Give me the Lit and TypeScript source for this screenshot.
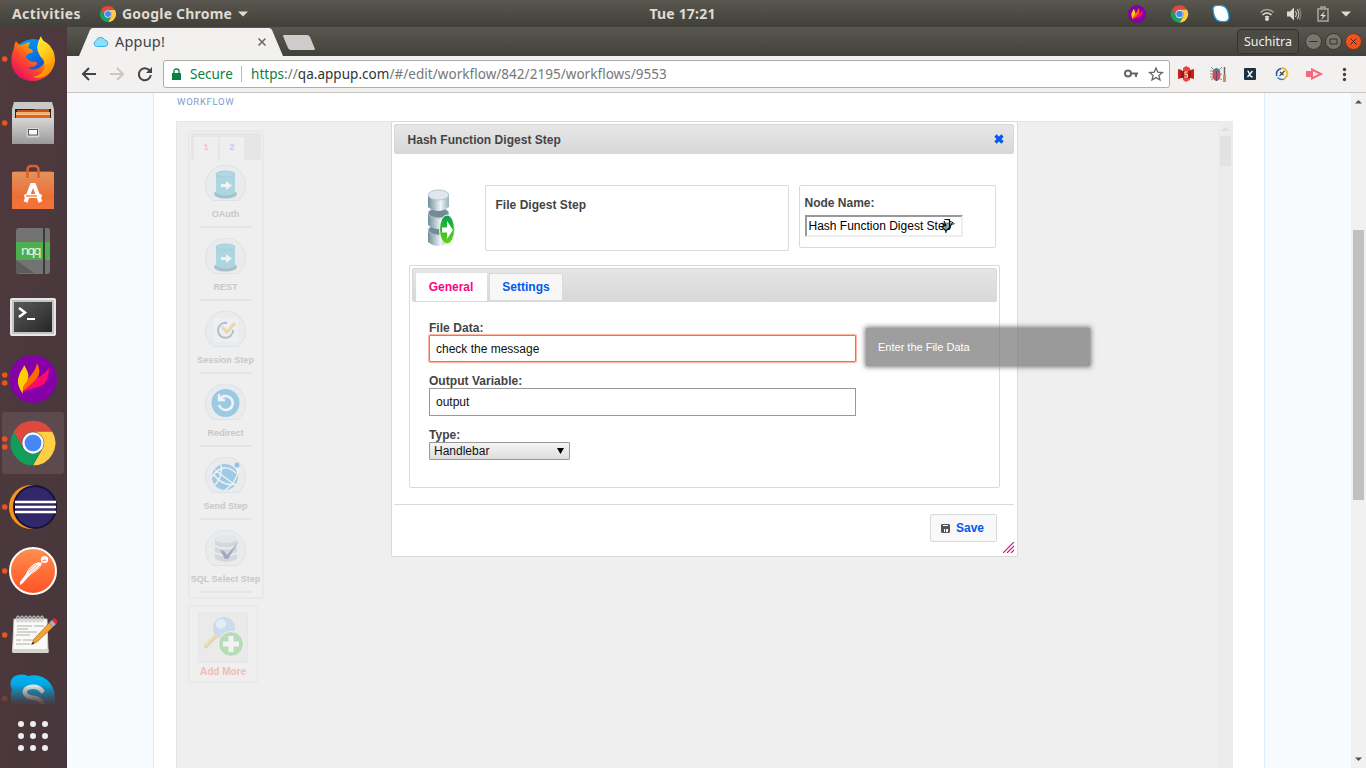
import { LitElement, html, svg, css } from "lit";
import { customElement } from "lit/decorators.js";

const chromeMark = (size: number) => html`<svg width=${size} height=${size} viewBox="-24 -24 48 48">
  <path fill="#dd4b3e" d="M-20.8-12A24 24 0 0 1 20.8-12H0A12 12 0 0 0-10.4 6Z" />
  <path fill="#ffcd43" transform="rotate(120)" d="M-20.8-12A24 24 0 0 1 20.8-12H0A12 12 0 0 0-10.4 6Z" />
  <path fill="#16a160" transform="rotate(240)" d="M-20.8-12A24 24 0 0 1 20.8-12H0A12 12 0 0 0-10.4 6Z" />
  <circle r="11.2" fill="#f4f6fb" /><circle r="8.9" fill="#4587f4" />
</svg>`;

const flame = svg`
  <circle cx="24" cy="24" r="24" fill="#8600a8" />
  <path fill="#ff0a6c" d="M15 37C14 27 28 25 33 20Q37 17 40 13Q40 23 35 29Q29 33 22 34Q18 35 15 37Z" />
  <path fill="#ff6a00" d="M14 34C16 24 27 18 28 8Q33 17 28 23Q24 28 14 36Z" />
  <path fill="#ffce00" d="M14 39Q8 31 9 24Q10 18 14 13Q15 11 15 10Q21 19 19 24C17 29 13 30 14 39Z" />`;

const dockIcons = [
  { dots: [31], art: svg`
    <defs>
      <linearGradient id="fx" x1="1" y1="0" x2="0.1" y2="1"><stop offset="0" stop-color="#fff44f"/><stop offset=".35" stop-color="#ffa000"/><stop offset=".6" stop-color="#ff4b2b"/><stop offset="1" stop-color="#e0006f"/></linearGradient>
      <linearGradient id="fb" x1="0" y1="0" x2="1" y2="1"><stop offset="0" stop-color="#00b5f5"/><stop offset=".5" stop-color="#0a6fe8"/><stop offset="1" stop-color="#2a2a8c"/></linearGradient>
      <linearGradient id="fy" x1="0" y1="0" x2=".5" y2="1"><stop offset="0" stop-color="#fff14a"/><stop offset=".5" stop-color="#ffd21e"/><stop offset="1" stop-color="#ff8a00"/></linearGradient>
    </defs>
    <circle cx="33.5" cy="31" r="20" fill="url(#fb)"/>
    <path fill="url(#fx)" d="M16 13Q18 17 22 17Q26 15 30 14L28 20Q33 21 33 24L28 26Q25 28 26 30Q29 33 33 34Q37 33 37 36Q34 40 27 39Q31 43 36 41Q44 39 46 30L54 26Q56 38 49 46Q41 54 30 53Q16 51 12 39Q10 30 14 20Q14 16 16 13Z"/>
    <path fill="url(#fy)" d="M41 8Q42 13 47 15Q55 21 55 33Q54 43 45 48Q38 51 33 49Q44 47 45 38Q45 33 40 28Q34 19 41 8Z"/>` },
  { dots: [31], art: svg`
    <defs><linearGradient id="cab" x2="0" y2="1"><stop offset="0" stop-color="#d6d6d6"/><stop offset="1" stop-color="#9a9a9a"/></linearGradient></defs>
    <path fill="#c9c9c9" d="M14 10h38l2 7v35H12V17z"/><rect x="15" y="17" width="36" height="13" fill="#2a2320"/>
    <path fill="#c2511a" d="M17 18h17l1-1h14v3H17z"/><path fill="#f3b06a" d="M16 20h34v2H16z"/><path fill="#e0621f" d="M16 23h34v3H16z"/><path fill="#f5c28c" d="M16 22h34v1H16z"/>
    <rect x="12" y="26" width="42" height="26" fill="url(#cab)"/><rect x="26.500" y="35.500" width="13" height="10" rx="2" fill="#d8d8d8" stroke="#bbb"/><rect x="28.500" y="37.500" width="9" height="5.500" fill="#fafafa" stroke="#555"/>` },
  { dots: [], art: svg`
    <defs><linearGradient id="bag" x2="0" y2="1"><stop offset="0" stop-color="#e5915b"/><stop offset="1" stop-color="#ee5f24"/></linearGradient></defs>
    <path fill="#b04a1d" d="M14 15h38v4H14z"/><path fill="url(#bag)" d="M12 16h42v37H12z"/><path fill="#f27239" d="M12 43h42v10H12z"/>
    <path d="M27.500 22v-8q0-4 4-4h3q4 0 4 4v8" fill="none" stroke="#e45d26" stroke-width="2.500"/>
    <path d="M25.500 46l6.500-17h2l6.500 17" fill="none" stroke="#fff" stroke-width="4"/><rect x="24" y="38" width="18" height="4" rx="2" fill="#fff"/><path d="M26 40h11" stroke="#f06a2e" stroke-width="1.200"/>` },
  { dots: [], art: svg`
    <rect x="16" y="8" width="34" height="46" rx="3" fill="#737373"/><rect x="16" y="22" width="34" height="18" fill="#4caf50"/><path fill="#5c5c5c" d="M16 40l18 13h-16q-2 0-2-2z"/><path d="M44 8v46" stroke="#3c3c3c" stroke-width="2"/>
    <text x="21" y="34.500" class="nqq" textLength="20.500">nqq</text>` },
  { dots: [], art: svg`
    <defs><linearGradient id="tm" x2="1" y2="1"><stop offset="0" stop-color="#5a5a5a"/><stop offset="1" stop-color="#262626"/></linearGradient></defs>
    <rect x="10" y="14" width="46" height="38" rx="2" fill="#e6e6e6"/><rect x="12" y="16" width="42" height="34" fill="#c4c4c4"/><rect x="14" y="18" width="38" height="30" fill="url(#tm)"/><path d="M19 24l6 4.500-6 4.500" fill="none" stroke="#fff" stroke-width="2.500"/><path d="M27 35h8" stroke="#fff" stroke-width="2"/>` },
  { dots: [27, 35], art: svg`<g transform="translate(9 7)">${flame}</g>` },
  { dots: [27, 35], active: true, art: svg`<g transform="translate(33 31) scale(.93)">
    <path fill="#dc4a3d" d="M-20.8-12A24 24 0 0 1 20.8-12H0A12 12 0 0 0-10.4 6Z" />
    <path fill="#ffce44" transform="rotate(120)" d="M-20.8-12A24 24 0 0 1 20.8-12H0A12 12 0 0 0-10.4 6Z" />
    <path fill="#119e5b" transform="rotate(240)" d="M-20.8-12A24 24 0 0 1 20.8-12H0A12 12 0 0 0-10.4 6Z" />
    <circle r="11.500" fill="#f4f6fb" /><circle r="9" fill="#4587f4" /></g>` },
  { dots: [31], art: svg`
    <circle cx="31" cy="31" r="22" fill="#f7941e"/><circle cx="35" cy="31" r="22" fill="#18133a"/><circle cx="35" cy="31" r="20" fill="#32276b"/>
    <path d="M15 26h41M15 31h41M15 36h41" stroke="#fff" stroke-width="2.300"/>` },
  { dots: [31], art: svg`
    <defs><linearGradient id="pm" x2="0" y2="1"><stop offset="0" stop-color="#ff8f4e"/><stop offset="1" stop-color="#ff5325"/></linearGradient></defs>
    <circle cx="33" cy="31" r="23" fill="url(#pm)" stroke="#fff" stroke-width="2"/>
    <circle cx="44.500" cy="19.500" r="3.600" fill="#fff"/><path d="M42 23Q41 27 36 31L29 36 23 43 20 45 20 42 26 34Q28 28 34 24Q39 21 42 23Z" fill="#fff"/><path d="M38 25l-9 8M36 24l-8 7M40 26l-9 8" stroke="#ff7840" stroke-width=".7"/><path d="M42.500 20.500l4-.5" stroke="#ff7840"/>` },
  { dots: [31], art: svg`
    <path fill="#fafaf8" stroke="#cfcfc8" d="M14 15h33l1 33H12.500z"/><path fill="#d4d4ce" d="M12.500 45h36v4h-36z"/>
    ${[18, 22, 26, 30, 34, 38, 42].map((x) => svg`<ellipse cx=${x} cy="15" rx="1.300" ry="3" fill="none" stroke="#ccc" stroke-width="1.200"/>`)}
    <path d="M17 22h15m2 0h10M17 25h11M17 28h20M16 31h14M16 36h5m2 0h10M16 40h14" stroke="#999" stroke-width=".8"/>
    <path fill="#f3a236" stroke="#9b5b18" stroke-width=".6" d="M32 40l2-5 15-16 4 4-16 15z"/><path fill="#a8b0b5" d="M49 19l3-3 4 4-3 3z"/><path fill="#e4283c" d="M52 16q2-3 4-1t1 4l-1 1z"/><path fill="#222" d="M31 41l2-3 1.500 1.500z"/>` },
  { dots: [31], art: svg`
    <defs><linearGradient id="sk" x2="0" y2="1"><stop offset="0" stop-color="#00b3f2"/><stop offset="1" stop-color="#0793c6"/></linearGradient></defs>
    <path fill="url(#sk)" d="M12 22Q8 13 14 8.500Q21 5 28 8Q42 5 50 15Q56 22 55 36H11V24Z"/><path d="M42 23Q38 18 31 19Q24 20 25 25Q26 29 34 30Q40 31 42 35" fill="none" stroke="#eee" stroke-width="4.500" stroke-linecap="round"/>
    <defs><linearGradient id="fade" x2="0" y2="1"><stop offset=".45" stop-color="#4a373c" stop-opacity="0"/><stop offset=".95" stop-color="#4a373c" stop-opacity=".9"/></linearGradient></defs><rect width="67" height="36" fill="url(#fade)"/>` },
];

const drum = svg`<ellipse cx="20.500" cy="29" rx="11.500" ry="4.500" fill="#48818f"/><path fill="#52b7cd" d="M11 9h19v19q-9 5-19 0z"/><ellipse cx="20.500" cy="9" rx="9.500" ry="3" fill="#58bed2" stroke="#399cb5" stroke-width=".8"/><path fill="#fff" d="M16 19h5v-3l6 4.500-6 4.500v-3h-5z"/>`;
const steps = [
  { name: "OAuth", art: drum },
  { name: "REST", art: drum },
  { name: "Session Step", art: svg`<rect x="9" y="7" width="24" height="24" fill="#f5f6f6"/><path d="M22 12a7.500 7.500 0 1 0 6 7" fill="none" stroke="#677a9f" stroke-width="2"/><path d="M17 16l5 5 8-9" fill="none" stroke="#edb746" stroke-width="3"/>` },
  { name: "Redirect", art: svg`<circle cx="20.500" cy="19" r="14" fill="#2a99d9"/><path d="M15 15a7 7 0 1 1-1 6M14 10v6h6" fill="none" stroke="#fff" stroke-width="2.400"/>` },
  { name: "Send Step", art: svg`<circle cx="20" cy="20" r="13" fill="#359bd8"/><path d="M20 33Q34 24 33 8M7 20Q18 4 31 16M10 28Q18 19 16 8M8 17Q18 30 31 27M10 13l20 15" fill="none" stroke="#fff" stroke-width="1.300"/><circle cx="32" cy="8" r="2.500" fill="#2182ca"/>` },
  { name: "SQL Select Step", art: svg`<path fill="#b9bcbf" d="M10 9v20q11 6 22 0V9z"/><ellipse cx="21" cy="9" rx="11" ry="4" fill="#dfe0e1"/><path d="M10 16q11 5 22 0M10 23q11 5 22 0" fill="none" stroke="#f4f4f4" stroke-width="1.500"/><path fill="#354a90" d="M15 20l4 1 3 4 12-14-11 18h-3z"/>` },
];

@customElement("app-root")
export class AppRoot extends LitElement {
  static styles = css`
    :host { display: flex; flex-direction: column; width: 1366px; height: 768px; overflow: hidden; font-family: "Liberation Sans", sans-serif; color: #444; }
    * { box-sizing: border-box; }
    svg { display: block; flex: none; }
    .panel { height: 27px; display: grid; grid-template-columns: 1fr auto 1fr; align-items: center; padding: 0 13px 0 12px; background: linear-gradient(#59574f, #403f39); color: #dfdbd2; font: 700 14px/25px "Noto Sans", sans-serif; }
    .pleft, .pright { display: flex; align-items: center; }
    .pright { justify-content: flex-end; padding-right: 1px; }
    .act { width: 88px; letter-spacing: .4px; }
    .app { margin-left: 6px; width: 111px; letter-spacing: .2px; white-space: nowrap; }
    .tri { margin-left: 5px; }
    .clock { letter-spacing: .2px; }
    .main { display: flex; height: 741px; }
    .dock { width: 67px; background: linear-gradient(100deg, #4f3a3e, #47363b); }
    .list { height: 677px; overflow: hidden; padding-top: 1px; }
    .item { position: relative; width: 67px; height: 64px; }
    .item.active::before { content: ""; position: absolute; left: 2px; top: 0; width: 62px; height: 62px; background: #5d4a4f; border-radius: 3px; }
    .item svg { position: relative; }
    .nqq { font: 13px "Noto Sans", sans-serif; fill: #e8f5e9; }
    .win { flex: 1; display: flex; flex-direction: column; }
    .tabs { height: 29px; display: flex; background: linear-gradient(#59584f, #41403a); }
    .tab { position: relative; width: 204px; margin-left: 12px; padding: 0 17px 0 14px; display: flex; align-items: center; font: 14.500px/24px "Noto Sans", sans-serif; color: #444; }
    .tabshape { position: absolute; left: 0; top: 0; }
    .tab > :not(.tabshape) { position: relative; }
    .tab span { margin-left: 6px; flex: 1; letter-spacing: .2px; padding-bottom: 1px; }
    .newtab { margin: 8px 0 0 0; }
    .wctl { margin-left: auto; display: flex; align-items: center; gap: 3px; padding-right: 4px; }
    .user { width: 62px; height: 25px; border: 1px solid #33322d; border-radius: 4px; background: #4b4a44; color: #eee; font: 12.500px/23px "Noto Sans", sans-serif; text-align: center; margin-right: 3px; }
    .bar { height: 37px; background: #f2f1f0; border-bottom: 1px solid #c6c5c4; display: flex; align-items: center; }
    .nav { width: 96px; }
    .addr { width: 1007px; height: 28px; border: 1px solid #aeaead; border-radius: 3px; background: #fff; display: flex; align-items: center; padding: 0 4px 0 8px; font: 13.500px/26px "Noto Sans", sans-serif; color: #3d3d3d; }
    .sec { color: #0b8043; margin-left: 9px; width: 43px; white-space: nowrap; }
    .sep { width: 1px; height: 16px; background: #bbb; margin: 0 9px 0 8px; }
    .url { flex: 1; white-space: nowrap; color: #777; letter-spacing: .035px; }
    .url b { color: #0b8043; font-weight: 400; } .url i { color: #333; font-style: normal; }
    .page { flex: 1; display: flex; background: #f8fbfe; min-height: 0; }
    .sheet { width: 1112px; margin-left: 86px; background: #fff; border: solid #dbedfb; border-width: 0 1px; padding: 3px 31px 0 22px; }
    .wf { margin: 0; height: 25px; padding-left: 1px; color: #7d9cc9; font: 400 9.500px/12px Roboto, sans-serif; letter-spacing: .7px; }
    .canvas { position: relative; height: 647px; background: #efefef; border: 1px solid #e5e5e5; border-bottom: 0; padding: 8px 0 0 11px; }
    .palette { width: 76px; height: 469px; border: 2px solid #e9e9e9; border-radius: 3px; }
    .ptabs { height: 27px; margin: 1px 1px 5px; width: 70px; border-radius: 3px; background: #e6e6e6; display: flex; padding: 4px 0 0 3px; gap: 2px; font: bold 9px/21px "Liberation Sans", sans-serif; text-align: center; }
    .ptabs span { width: 24px; background: #efefef; } .p1 { color: #efbbd6; } .p2 { color: #b9c9ef; }
    .step { height: 73px; margin-right: 1px; display: flex; flex-direction: column; align-items: center; color: #c8c8c8; font: bold 9.050px/12px "Liberation Sans", sans-serif; white-space: nowrap; }
    .step svg { margin-bottom: 6px; width: 41px; }
    .art { opacity: .4; }
    .step hr { margin: 6px 0 0; width: 52px; height: 2px; border: 0; background: #e5e5e5; flex: none; }
    .more { margin-top: 6px; width: 70px; height: 78px; border: 1px solid #e7e7e7; border-radius: 2px; padding-top: 6px; display: flex; flex-direction: column; align-items: center; color: #f2bcb2; font: bold 10px/17px "Liberation Sans", sans-serif; white-space: nowrap; }
    .vs { position: absolute; right: -1px; top: -1px; width: 15px; height: 647px; background: #ececec; }
    .vs::before { content: ""; position: absolute; left: 2px; top: 15px; width: 11px; height: 30px; background: #e2e2e2; }
    .vs svg { margin: 5px 0 0 3px; }
    .dialog { position: absolute; left: 214px; top: -1px; width: 627px; height: 436px; border: 1px solid #dadada; border-radius: 2px; background: #fff; padding: 2px 3px 2px 2px; font: 12px/15px "Liberation Sans", sans-serif; }
    .title { height: 30px; border: 1px solid #d8d8d8; border-radius: 2px; background: linear-gradient(#e6e6e6, #d8d8d8); padding: 0 9px 0 12.500px; display: flex; align-items: center; justify-content: space-between; font-weight: bold; color: #444; letter-spacing: .03px; }
    .title span { padding-top: 2px; }
    .top { display: flex; margin-top: 31px; height: 80px; padding-left: 33px; align-items: flex-start; }
    .top > svg { margin: 4px 0 0 1px; }
    .box { border: 1px solid #dadada; border-radius: 2px; font-weight: bold; }
    .desc { width: 304px; height: 66px; margin-left: 28px; padding: 12px 9.500px; letter-spacing: .03px; }
    .node { width: 197px; height: 63px; margin-left: 10px; padding: 10px 5px 0 4.500px; }
    .nin { position: relative; width: 158px; height: 22px; margin-top: 4px; border: 2px solid; border-color: #999 #eee #eee #999; font-weight: 400; color: #000; padding-left: 2px; line-height: 19px; white-space: nowrap; }
    .nin svg { position: absolute; left: 132px; top: 0; }
    .pane { width: 591px; height: 223px; margin-left: 15px; border: 1px solid #dadada; border-radius: 2px; padding: 2px; }
    .thead { height: 34px; border: 1px solid #d8d8d8; border-radius: 2px; background: linear-gradient(#e5e5e5, #d8d8d8); display: flex; padding: 4px 2px 0 3px; gap: 2px; font-weight: bold; line-height: 28px; text-align: center; }
    .t1 { width: 71px; background: #fff; color: #fb0680; padding-right: 1px; } .t2 { width: 74px; height: 28px; border: 1px solid #dadada; background: #f7f7f7; color: #0359ec; line-height: 26px; }
    .form { padding: 19px 0 0 17px; display: flex; flex-direction: column; }
    .form label { font-weight: bold; height: 14px; letter-spacing: .04px; }
    .in { width: 427px; height: 28px; border: 1px solid #999; color: #111; padding-left: 6px; line-height: 26px; margin-bottom: 12px; }
    .in.f { height: 27px; border-color: #dd7852; box-shadow: 0 0 1px 1px #ffb199; border-radius: 1px; }
    .sel { width: 141px; height: 18px; border: 1px solid #999; border-radius: 1px; background: linear-gradient(#f5f5f5, #dedede); color: #111; padding: 0 5px 0 4px; line-height: 16px; display: flex; justify-content: space-between; align-items: center; }
    .foot { border-top: 1px solid #dadada; margin-top: 16px; padding: 9px 17px 0 0; display: flex; justify-content: flex-end; }
    .save { width: 67px; height: 28px; border: 1px solid #dadada; border-radius: 2px; background: #f8f8f8; display: flex; align-items: center; color: #0359ec; font-weight: bold; padding-left: 10px; gap: 6px; }
    .grip { position: absolute; right: 3px; bottom: 3px; }
    .tip { position: absolute; left: 689px; top: 206px; width: 224px; height: 38px; background: rgba(128, 128, 128, .76); box-shadow: 0 0 5px 1px #777; color: #fff; font: 11px/38px "Liberation Sans", sans-serif; padding-left: 12px; }
    .scroll { width: 15px; margin-left: auto; background: #f1f1f1; display: flex; flex-direction: column; align-items: center; padding: 6px 0; }
    .thumb { width: 11px; height: 270px; background: #c1c1c1; margin: 126px 0 auto; }
  `;

  render() {
    return html`
      <div class="panel">
        <div class="pleft"><span class="act">Activities</span>${chromeMark(16)}<span class="app">Google Chrome</span>
          <svg class="tri" width="10" height="6"><path d="M0 .5h10l-5 5z" fill="#dfdbd2" /></svg></div>
        <span class="clock">Tue 17:21</span>
        <div class="pright">
          <svg width="238" height="26" viewBox="1114 0 238 26">
            <g transform="translate(1128 4) scale(.375)">${flame}</g>
            <g transform="translate(1179.500 13) scale(.36)"><path fill="#dd4b3e" d="M-20.800-12A24 24 0 0 1 20.800-12H0A12 12 0 0 0-10.400 6Z"/><path fill="#ffcd43" transform="rotate(120)" d="M-20.800-12A24 24 0 0 1 20.800-12H0A12 12 0 0 0-10.400 6Z"/><path fill="#16a160" transform="rotate(240)" d="M-20.800-12A24 24 0 0 1 20.800-12H0A12 12 0 0 0-10.400 6Z"/><circle r="11.500" fill="#f4f6fb"/><circle r="9" fill="#4587f4"/></g>
            <path fill="#fff" stroke="#159bd8" stroke-width="1.200" d="M1213 7q1-3 5-2.500 8-1 10 6.500 1 4 1 6-1 4-5 3.500-8 1-10-6.500-1-4-1-7z"/>
            <g fill="none" stroke="#dfdbd2" stroke-width="1.500"><path opacity=".6" d="M1260.500 11.500q6.500-6 13 0"/><path d="M1262.500 14q4.500-4 9 0"/></g><path d="M1264.500 15.500q2.500-1.500 5 0l-1 1h-3z" fill="#dfdbd2"/><circle cx="1267" cy="18" r="2" fill="#dfdbd2"/>
            <path fill="#dfdbd2" d="M1287 10.500h3l4-4v13l-4-4h-3z"/><path fill="none" stroke="#dfdbd2" d="M1295.500 10q2 3 0 6M1297.500 8q3 5 0 10"/><path fill="none" stroke="#908d85" d="M1299.500 7q3 6 0 12"/>
            <path fill="none" stroke="#aaa79f" stroke-width="1.500" d="M1318 8h10v12h-10zM1321 8V6h4v2"/><path fill="#dfdbd2" d="M1325 10l-5 5h3l-2 4 5-5h-3z"/>
            <path d="M1341 10.500h10l-5 5z" fill="#dfdbd2"/>
          </svg>
        </div>
      </div>
      <div class="main">
        <div class="dock">
          <div class="list">${dockIcons.map((d) => html`<div class="item ${(d as any).active ? "active" : ""}">
            <svg width="67" height="64" viewBox="0 0 67 64">${d.dots.map((y) => svg`<circle cx="4.700" cy=${y} r="2.800" fill="#e95420"/>`)}${d.art}</svg></div>`)}</div>
          <svg width="67" height="64" viewBox="0 0 67 64">${[20, 32, 44].map((y) => [21, 33, 45].map((x) => svg`<circle cx=${x} cy=${y} r="3" fill="#eee"/>`))}</svg>
        </div>
        <div class="win">
          <div class="tabs">
            <div class="tab">
              <svg class="tabshape" width="206" height="29"><path d="M0 29L11 3Q12 1 14 1H190Q192 1 193 3L204 29Z" fill="#f2f1f0"/></svg>
              <svg width="16" height="12" viewBox="0 0 16 12"><path d="M3.500 10.500a3 3 0 0 1-.3-5.800 4.500 4.500 0 0 1 8.400-.8 3.400 3.400 0 0 1 1 6.600z" fill="#8fdcfb" stroke="#35b5ec"/></svg>
              <span>Appup!</span>
              <svg width="8" height="8"><path d="M.5.500l7 7m0-7l-7 7" stroke="#666" stroke-width="1.500"/></svg>
            </div>
            <svg class="newtab" width="33" height="16"><path d="M0 1Q0 0 1 0H24Q26 0 27 2L32 14Q32 15 31 15H8Q6 15 5 13Z" fill="#cfcdcb"/></svg>
            <div class="wctl"><div class="user">Suchitra</div>
              <svg width="17" height="17"><circle cx="8.500" cy="8.500" r="8" fill="#77756c" stroke="#37362f"/><path d="M4.500 8.500h8" stroke="#33322d"/></svg>
              <svg width="17" height="17"><circle cx="8.500" cy="8.500" r="8" fill="#77756c" stroke="#37362f"/><path d="M5 6h7v5H5z" fill="none" stroke="#33322d"/></svg>
              <svg width="17" height="17"><circle cx="8.500" cy="8.500" r="8" fill="#f3541f" stroke="#7c2c12"/><path d="M5.500 5.500l6 6m0-6l-6 6" stroke="#4a2012"/></svg>
            </div>
          </div>
          <div class="bar">
            <svg class="nav" width="96" height="36" viewBox="67 56 96 36" fill="none" stroke-width="2"><path stroke="#444" d="M96 74H83.500M89 68l-6 6 6 6"/><path stroke="#c9c8c7" d="M110 74h12.500M117 68l6 6-6 6"/><path stroke="#444" d="M149.500 70.500a6 6 0 1 0 1.300 4.500"/><path fill="#444" d="M152 67v6h-6z"/></svg>
            <div class="addr">
              <svg width="9" height="12"><path fill="#0b8043" d="M0 5h9v7H0z"/><path d="M2 6V3q0-2 2.500-2T7 3v3" fill="none" stroke="#0b8043" stroke-width="1.300"/></svg>
              <span class="sec">Secure</span><span class="sep"></span>
              <span class="url"><b>https</b>://<i>qa.appup.com</i>/#/edit/workflow/842/2195/workflows/9553</span>
              <svg width="42" height="16" viewBox="1123 66 42 16"><circle cx="1128" cy="73.500" r="3" fill="none" stroke="#666" stroke-width="2"/><path d="M1131 73.500h7m-2 0v3.500" stroke="#666" stroke-width="2" fill="none"/><path d="M1156 68l1.800 4.200 4.600.4-3.500 3 1.100 4.400-4-2.400-4 2.400 1.100-4.400-3.500-3 4.600-.4z" fill="none" stroke="#666" stroke-width="1.300"/></svg>
            </div>
            <svg width="196" height="36" viewBox="1170 56 196 36">
              <path fill="#c8201f" d="M1178 69l4 1v8l-4 1zM1194 69l-4 1v8l4 1z"/><path fill="#e5473d" d="M1183 68l3-2 4 2v12l-4 2-3-2z"/><path fill="#a41517" d="M1181 71h3v7h-3zM1188 71h3v7h-3z"/><path d="M1187.500 72h-2.500v2.500h2.500v2.500h-3" stroke="#f8d0c8" fill="none"/>
              <path d="M1211 67l4 4m-5 3h5m-4 6l4-3m7-10l-4 4m4 3h-4m4 6l-4-3M1210 71h5m-5 6h5" stroke="#888"/><ellipse cx="1216.500" cy="75" rx="4" ry="6" fill="#cf4c5d"/><path d="M1212.500 72q4-8 8 0z" fill="#64748a"/><path d="M1216.500 71v10" stroke="#647"/><path d="M1224.500 67v9" stroke="#666" stroke-width="1.500"/><path d="M1224.500 75v7" stroke="#c59563" stroke-width="3"/>
              <rect x="1244" y="68" width="12" height="12" rx="1" fill="#1b3042"/><path d="M1247.500 71q1 0 2 3t3 3m0-6l-5 6" fill="none" stroke="#fff" stroke-width="1.300"/>
              <path d="M1276.800 76a5.500 5.500 0 0 1 4.500-7.500" fill="none" stroke="#174f9e" stroke-width="1.600"/><path d="M1277.500 77.500q3 3 7 1.500" fill="none" stroke="#3c82c4" stroke-width="1.300"/><path d="M1281.500 68a5.500 5.500 0 0 1 4 9.500l-1 1" fill="none" stroke="#f4ba2b" stroke-width="2"/><path d="M1279.500 76l5-5m-4.500 1l3.500 3" stroke="#345" stroke-width="1.200"/>
              <path fill="#f8687a" d="M1306 71h5v6h-5z"/><path d="M1312 69.500l9 4.500-9 4.500z" fill="none" stroke="#f8687a" stroke-width="2"/>
              <g fill="#444"><circle cx="1344.500" cy="69.500" r="1.700"/><circle cx="1344.500" cy="74.500" r="1.700"/><circle cx="1344.500" cy="79.500" r="1.700"/></g>
            </svg>
          </div>
          <div class="page">
            <div class="sheet">
              <h1 class="wf">WORKFLOW</h1>
              <div class="canvas">
                <div class="palette">
                  <div class="ptabs"><span class="p1">1</span><span class="p2">2</span></div>
                  ${steps.map((s) => html`<div class="step"><svg width="41" height="37" viewBox="0 0 41 37"><path d="M8 35.500A20 20 0 1 1 33 35.500Z" fill="#e9ebed" stroke="#d9e4e8"/><g class="art">${s.art}</g></svg><span>${s.name}</span><hr></div>`)}
                </div>
                <div class="more">
                  <svg width="50" height="51" viewBox="0 0 50 51"><rect width="50" height="50" fill="#eaeaea" stroke="#e3e3e3"/>
                    <path d="M8 34l11-11" stroke="#eadfb9" stroke-width="5" stroke-linecap="round"/><path d="M7 36l11-11" stroke="#c9c5b8"/><circle cx="26" cy="16" r="10" fill="#cbdcef" stroke="#d6d6e4" stroke-width="2"/><circle cx="23" cy="12" r="5" fill="#e1edf8"/>
                    <circle cx="33" cy="32" r="12.500" fill="#b8dcb8" stroke="#f1f1f1"/><path d="M33 24v16M25 32h16" stroke="#f3f3f3" stroke-width="5"/></svg>
                  <span>Add More</span>
                </div>
                <div class="vs"><svg width="8" height="6"><path d="M0 5l4-4 4 4z" fill="#ddd"/></svg></div>
                <div class="dialog">
                  <div class="title"><span>Hash Function Digest Step</span>
                    <svg width="10" height="10"><path d="M1.500 1.500l7 7m0-7l-7 7" stroke="#0359ec" stroke-width="3.200"/></svg></div>
                  <div class="top">
                    <svg width="29" height="58" viewBox="0 0 29 58">
                      <defs><linearGradient id="cy"><stop offset="0" stop-color="#6f8e9d"/><stop offset=".6" stop-color="#eef4f7"/><stop offset="1" stop-color="#9ab0ba"/></linearGradient><linearGradient id="gr" x2="0" y2="1"><stop offset="0" stop-color="#05a04b"/><stop offset="1" stop-color="#62d419"/></linearGradient></defs>
                      ${[36, 19, 1].map((y) => svg`<g transform="translate(0 ${y})"><path d="M0 5v12q10 8 21 0V5z" fill="url(#cy)"/><ellipse cx="10.500" cy="5" rx="10.200" ry="5" fill=${y === 1 ? "#dfe8ed" : "#748b97"} stroke="#b5c5cc"/></g>`)}
                      <ellipse cx="19" cy="40.500" rx="7.500" ry="14.500" fill="url(#gr)" stroke="#eefbe8"/><path fill="#fff" d="M14 38.500h5v-6.500l6 9-6 9v-6.500h-5z"/>
                    </svg>
                    <div class="box desc">File Digest Step</div>
                    <div class="box node">Node Name:<div class="nin">Hash Function Digest Step
                      <svg width="17" height="16" viewBox="0 0 17 16"><path d="M5.500 2.500h5v2h2M10.500 3v9M3 6l3 2.500-3 1.500 4 4 3-3 4-6M5 4l2 5" fill="#75a7a5" fill-opacity=".8" stroke="#111" stroke-width="1.200"/><path d="M13.500 8l2-2" stroke="#111"/></svg></div></div>
                  </div>
                  <div class="pane">
                    <div class="thead"><span class="t1">General</span><span class="t2">Settings</span></div>
                    <div class="form">
                      <label>File Data:</label><div class="in f">check the message</div>
                      <label>Output Variable:</label><div class="in">output</div>
                      <label>Type:</label><div class="sel"><span>Handlebar</span><svg width="7" height="6"><path d="M0 0h7L3.500 6z" fill="#000"/></svg></div>
                    </div>
                  </div>
                  <div class="foot"><div class="save"><svg width="9" height="9"><path fill="#555" d="M1 0h7l1 1v7l-1 1H1L0 8V1z"/><path fill="#fff" d="M2 1h5v1H2zM3 5h1v3H3zM5 5h2v3H5z"/></svg>Save</div></div>
                  <svg class="grip" width="11" height="11"><path d="M0 11l11-11M4 11l7-7M8 11l3-3" fill="none" stroke="#e0067c" stroke-width="1.100"/></svg>
                </div>
                <div class="tip">Enter the File Data</div>
              </div>
            </div>
            <div class="scroll"><svg width="7" height="5"><path d="M0 4.500h7L3.500 1z" fill="#505050"/></svg><div class="thumb"></div><svg width="7" height="5"><path d="M0 .5h7L3.500 4z" fill="#505050"/></svg></div>
          </div>
        </div>
      </div>`;
  }
}
